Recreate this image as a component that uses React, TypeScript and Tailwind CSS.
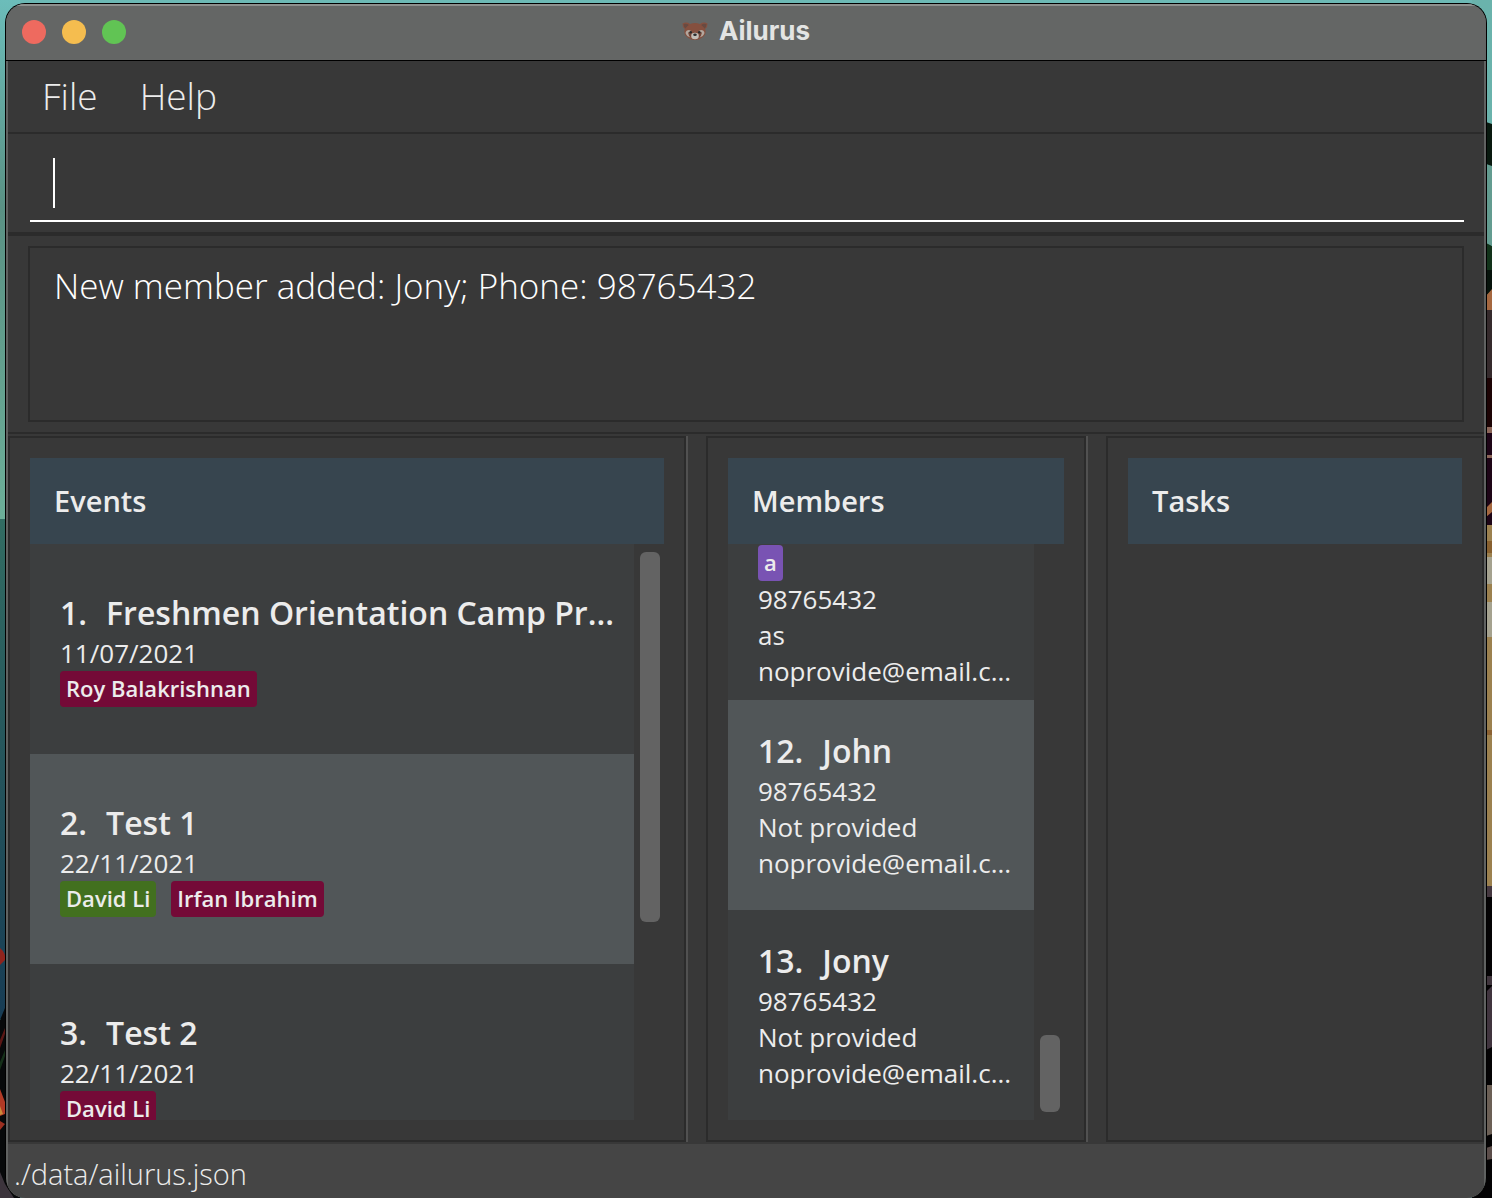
import React from "react";

type Tag = { label: string; tone: "crimson" | "green" | "purple" };
type Entry = { id: number; name?: string; before?: string[]; tags?: Tag[]; after?: string[] };

const toneClass: Record<Tag["tone"], string> = {
  crimson: "bg-[#740a37]",
  green: "bg-[#42701f]",
  purple: "bg-[#7953b3]",
};

const events: Entry[] = [
  {
    id: 1,
    name: "Freshmen Orientation Camp Pr...",
    before: ["11/07/2021"],
    tags: [{ label: "Roy Balakrishnan", tone: "crimson" }],
  },
  {
    id: 2,
    name: "Test 1",
    before: ["22/11/2021"],
    tags: [
      { label: "David Li", tone: "green" },
      { label: "Irfan Ibrahim", tone: "crimson" },
    ],
  },
  { id: 3, name: "Test 2", before: ["22/11/2021"], tags: [{ label: "David Li", tone: "crimson" }] },
];

const members: Entry[] = [
  { id: 11, tags: [{ label: "a", tone: "purple" }], after: ["98765432", "as", "noprovide@email.c..."] },
  { id: 12, name: "John", after: ["98765432", "Not provided", "noprovide@email.c..."] },
  { id: 13, name: "Jony", after: ["98765432", "Not provided", "noprovide@email.c..."] },
];

function EntryCard({ entry }: { entry: Entry }) {
  const shade = entry.id % 2 === 0 ? "bg-[#515658]" : "bg-[#3c3e3f]";
  return (
    <li className={`flex h-[210px] shrink-0 flex-col justify-center pl-[30px] text-[26px] leading-9 ${shade}`}>
      {entry.name ? (
        <h3 className="flex gap-[19px] whitespace-nowrap text-[32px] leading-[44px] font-semibold">
          <span>{entry.id}.</span>
          <span>{entry.name}</span>
        </h3>
      ) : (
        <div className="h-11" />
      )}
      {entry.before?.map((line) => (
        <p key={line} className="whitespace-nowrap">{line}</p>
      ))}
      {entry.tags && (
        <div className="flex gap-[15px]">
          {entry.tags.map((tag) => (
            <span
              key={tag.label}
              className={`h-9 rounded px-1.5 text-[22px] leading-[34px] font-semibold whitespace-nowrap ${toneClass[tag.tone]}`}
            >
              {tag.label}
            </span>
          ))}
        </div>
      )}
      {entry.after?.map((line) => (
        <p key={line} className="whitespace-nowrap">{line}</p>
      ))}
    </li>
  );
}

function Panel({ title, children }: { title: string; children?: React.ReactNode }) {
  return (
    <section className="flex min-h-0 min-w-0 flex-col border-2 border-[#2b2b2b] p-5">
      <h2 className="shrink-0 bg-[#37454f] px-6 text-[29px] leading-[86px] font-semibold">{title}</h2>
      {children}
    </section>
  );
}

function EntryList({ entries, atEnd = false }: { entries: Entry[]; atEnd?: boolean }) {
  return (
    <div className="flex min-h-0 flex-1 basis-0">
      <ul className={`flex min-w-0 flex-1 flex-col overflow-hidden ${atEnd ? "justify-end" : "justify-start"}`}>
        {entries.map((entry) => (
          <EntryCard key={entry.id} entry={entry} />
        ))}
      </ul>
      <div className={`flex w-[30px] flex-col py-2 pl-1.5 ${atEnd ? "justify-end" : "justify-start"}`}>
        <div className={`w-5 rounded-md bg-[#636363] ${atEnd ? "h-[77px]" : "h-[370px]"}`} />
      </div>
    </div>
  );
}

function Divider() {
  return <div className="border-l-2 border-[#515151]" />;
}

function RedPandaIcon() {
  return (
    <svg viewBox="0 0 26 20" className="h-5 w-[26px]" aria-hidden="true">
      <path
        d="M0.5 2.5 Q4.500 0.500 8 3 Q13 1.200 18 3 Q21.500 0.500 25.500 2.500 Q25.800 6 23.200 8 Q24.500 12 22 15 Q18 19 13 19 Q8 19 4 15 Q1.500 12 2.800 8 Q0.200 6 0.500 2.500Z"
        fill="#85503f"
      />
      <path d="M1.500 3 Q4.500 2 6.800 4 Q4.500 5.500 3.500 7.500 Q1.500 5.800 1.500 3Z" fill="#684a41" />
      <path d="M24.500 3 Q21.500 2 19.200 4 Q21.500 5.500 22.500 7.500 Q24.500 5.800 24.500 3Z" fill="#684a41" />
      <path d="M3.500 12 Q4 9 7 9 Q10 9.500 9.500 12.500 L8.500 16.500 Q4.500 15.500 3.500 12Z" fill="#b3a79e" />
      <path d="M22.500 12 Q22 9 19 9 Q16 9.500 16.500 12.500 L17.500 16.500 Q21.500 15.500 22.500 12Z" fill="#b3a79e" />
      <path d="M6 11.500 Q8 10.500 9.800 12.500 L9 17 Q6.500 15 6 11.500Z" fill="#744638" />
      <path d="M20 11.500 Q18 10.500 16.200 12.500 L17 17 Q19.500 15 20 11.500Z" fill="#744638" />
      <ellipse cx="13" cy="15" rx="3.800" ry="3.200" fill="#c3beb8" />
      <ellipse cx="13" cy="13.800" rx="1.800" ry="1.300" fill="#2a2b2d" />
      <circle cx="8.700" cy="11.300" r="1.300" fill="#2b2a2a" />
      <circle cx="17.300" cy="11.300" r="1.300" fill="#2b2a2a" />
    </svg>
  );
}

function Wallpaper() {
  return (
    <div className="absolute inset-0 flex justify-between bg-[#6cb9b5]" aria-hidden="true">
      <svg viewBox="0 0 20 1198" preserveAspectRatio="none" className="h-full w-5">
        <defs>
          <linearGradient id="sky" x1="0" y1="0" x2="0" y2="1">
            <stop offset="0" stopColor="#6cbdba" />
            <stop offset="0.4" stopColor="#5a9184" />
            <stop offset="1" stopColor="#6cae98" />
          </linearGradient>
          <linearGradient id="sea" x1="0" y1="0" x2="0" y2="1">
            <stop offset="0" stopColor="#326c62" />
            <stop offset="1" stopColor="#173c54" />
          </linearGradient>
        </defs>
        <rect width="20" height="519" fill="url(#sky)" />
        <rect y="519" width="20" height="500" fill="url(#sea)" />
        <path d="M0 948Q6 953 5 960L0 965Z" fill="#8f241d" />
        <path d="M0 1020L5 1008H20V1198H0Z" fill="#07090a" />
        <path d="M0 1040L5 1028V1034L0 1048Z" fill="#5a1715" />
        <path d="M0 1062L5 1050V1056L0 1070Z" fill="#153019" />
        <path d="M0 1089L5 1102V1114L0 1116Z" fill="#b13a25" />
        <path d="M0 1106L3 1114L0 1115Z" fill="#c98a3a" />
        <path d="M0 1121L5 1124L0 1130Z" fill="#9c2f20" />
        <path d="M0 1172L5 1184L14 1198H0Z" fill="#3c343c" />
      </svg>
      <svg viewBox="0 0 20 1198" preserveAspectRatio="none" className="h-full w-5">
        <rect width="20" height="310" fill="#6ab3ac" />
        <rect y="165" width="20" height="80" fill="#639c90" />
        <path d="M14 122L20 124V166L14 164Z" fill="#09190f" />
        <path d="M14 243L20 246V290L14 296Z" fill="#12331a" />
        <path d="M14 270H20V290L14 296Z" fill="#07130c" />
        <path d="M14 296L20 289V316H14Z" fill="#a5673f" />
        <rect y="310" width="20" height="70" fill="#352a2c" />
        <rect y="378" width="20" height="50" fill="#1d0405" />
        <rect y="427" width="20" height="6" fill="#8b6558" />
        <rect y="433" width="20" height="92" fill="#1e0517" />
        <rect y="455" width="20" height="3" fill="#8b6558" />
        <path d="M14 508L20 502V512L14 517Z" fill="#a5673f" />
        <rect y="525" width="20" height="361" fill="#9c814f" />
        <rect y="541" width="20" height="12" fill="#88602f" />
        <rect y="557" width="20" height="27" fill="#a5a28f" />
        <rect y="602" width="20" height="35" fill="#a5a28f" />
        <rect y="730" width="20" height="5" fill="#8c6233" />
        <rect y="886" width="20" height="11" fill="#453840" />
        <rect y="897" width="20" height="301" fill="#040304" />
        <rect y="976" width="20" height="9" fill="#3f343c" />
        <path d="M14 992L20 986V1047L14 1050Z" fill="#40343e" />
        <path d="M14 1085H20V1134L14 1136Z" fill="#6b5f55" />
        <path d="M14 1148L20 1146V1159L14 1160Z" fill="#5b4d4a" />
      </svg>
    </div>
  );
}

export default function App() {
  return (
    <div className="relative h-screen min-h-[900px] overflow-hidden px-[5px] pt-[3px] font-['Open_Sans',sans-serif] text-[#ececec]">
      <Wallpaper />
      <div className="relative flex h-full flex-col overflow-hidden rounded-[20px] border border-b-0 border-black bg-[#606261]">
        <header className="flex h-14 shrink-0 items-center border-t-2 border-[#8d908e] bg-[#646665] px-4 pb-0.5">
          <div className="flex flex-1 gap-4">
            <button aria-label="Close" className="size-6 rounded-full bg-[#ee6a5f]" />
            <button aria-label="Minimize" className="size-6 rounded-full bg-[#f5bd4f]" />
            <button aria-label="Zoom" className="size-6 rounded-full bg-[#61c454]" />
          </div>
          <div className="flex items-center gap-[11px] pb-0.5">
            <RedPandaIcon />
            <h1 className="font-['Inter',sans-serif] text-[26px] leading-8 font-bold text-[#e3e4e3]">Ailurus</h1>
          </div>
          <div className="flex-1" />
        </header>

        <div className="flex min-h-0 flex-1 flex-col overflow-hidden rounded-b-[20px] border-t border-black px-0.5">
          <nav className="flex h-[73px] shrink-0 items-center gap-[42px] border-b-2 border-[#2b2b2b] bg-[#383838] px-[34px] pb-0.5 text-[37px] leading-[52px] font-light">
            <button>File</button>
            <button>Help</button>
          </nav>

          <div className="relative shrink-0 border-b-4 border-[#2b2b2b] bg-[#383838] pt-3 pr-5 pb-2.5 pl-[22px]">
            <input
              aria-label="Command"
              className="block h-[76px] w-full border-b-2 border-white bg-transparent px-6 text-[35px] font-light caret-transparent outline-none"
            />
            <span className="absolute top-6 left-[45px] h-[50px] w-0.5 bg-white" />
          </div>

          <div className="shrink-0 border-b-2 border-[#2b2b2b] bg-[#383838] px-5 py-2.5">
            <textarea
              readOnly
              aria-label="Result"
              value="New member added: Jony; Phone: 98765432"
              className="block h-44 w-full resize-none border-2 border-[#2b2b2b] bg-transparent px-6 py-[13px] text-[35px] leading-[50px] font-light text-white outline-none"
            />
          </div>

          <main className="grid min-h-0 flex-1 grid-cols-[minmax(0,678fr)_20px_minmax(0,380fr)_20px_minmax(0,378fr)] grid-rows-[minmax(0,1fr)] bg-[#383838] py-0.5">
            <Panel title="Events">
              <EntryList entries={events} />
            </Panel>
            <Divider />
            <Panel title="Members">
              <EntryList entries={members} atEnd />
            </Panel>
            <Divider />
            <Panel title="Tasks" />
          </main>

          <footer className="h-[54px] shrink-0 bg-[#454545] px-1.5 pt-2 text-[29px] leading-[44px] font-light">
            ./data/ailurus.json
          </footer>
        </div>
      </div>
    </div>
  );
}
